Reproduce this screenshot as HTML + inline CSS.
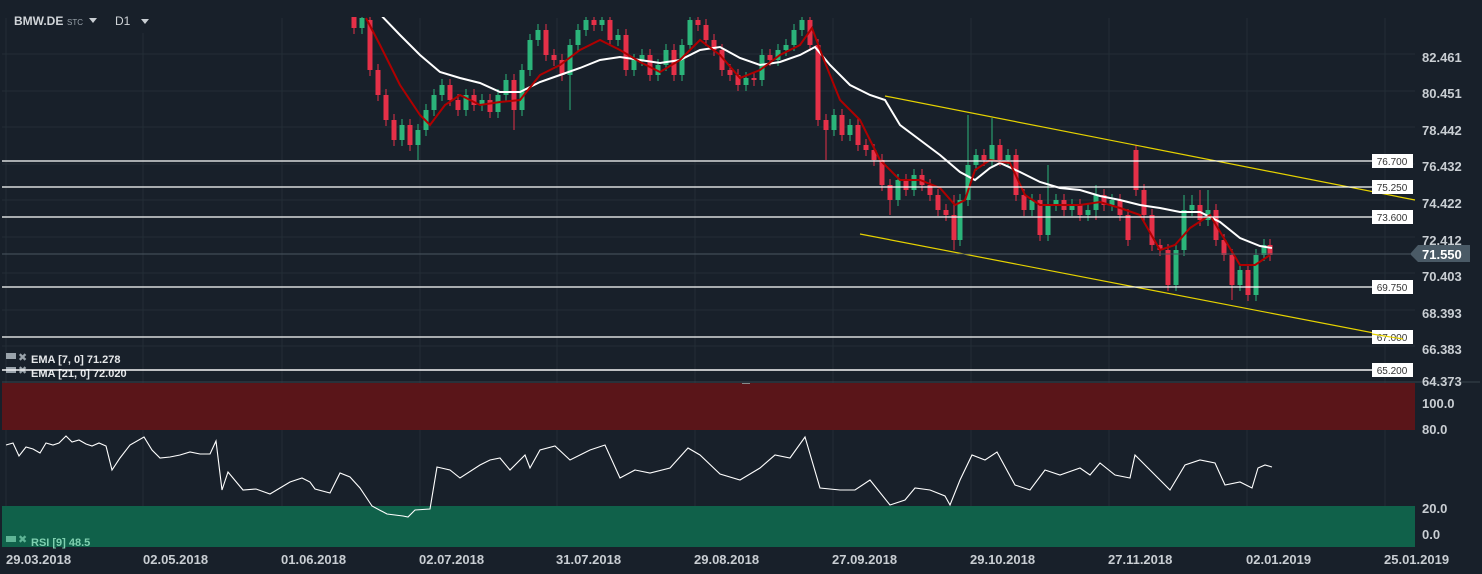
<!DOCTYPE html><html><head><style>
body{margin:0;width:1482px;height:574px;background:#18202a;overflow:hidden;font-family:"Liberation Sans",sans-serif}
svg{position:absolute;left:0;top:0}
</style></head><body>
<svg width="1482" height="574" xmlns="http://www.w3.org/2000/svg" font-family="Liberation Sans, sans-serif">
<defs><clipPath id="cp"><rect x="0" y="17" width="1415" height="360"/></clipPath></defs>
<rect width="1482" height="574" fill="#18202a"/>
<g stroke="#232d36" stroke-width="1">
<line x1="6" y1="18" x2="6" y2="547"/><line x1="143" y1="33" x2="143" y2="547"/><line x1="282" y1="18" x2="282" y2="547"/><line x1="420" y1="18" x2="420" y2="547"/><line x1="557" y1="18" x2="557" y2="547"/><line x1="695" y1="18" x2="695" y2="547"/><line x1="833" y1="18" x2="833" y2="547"/><line x1="971" y1="18" x2="971" y2="547"/><line x1="1109" y1="18" x2="1109" y2="547"/><line x1="1247" y1="18" x2="1247" y2="547"/><line x1="1385" y1="18" x2="1385" y2="547"/>
<line x1="2" y1="54" x2="1415" y2="54"/><line x1="2" y1="91" x2="1415" y2="91"/><line x1="2" y1="127" x2="1415" y2="127"/><line x1="2" y1="164" x2="1415" y2="164"/><line x1="2" y1="200" x2="1415" y2="200"/><line x1="2" y1="237" x2="1415" y2="237"/><line x1="2" y1="273" x2="1415" y2="273"/><line x1="2" y1="310" x2="1415" y2="310"/><line x1="2" y1="346" x2="1415" y2="346"/>
</g>
<rect x="2" y="383" width="1413" height="47" fill="#5a1519"/>
<rect x="2" y="506" width="1413" height="41" fill="#10614a"/>
<line x1="2" y1="382" x2="1480" y2="382" stroke="#39434c"/>
<g clip-path="url(#cp)">
<path stroke="#e53048" stroke-width="1" fill="none" d="M354 4V34M370 14V76M378 64V101M386 89V126M394 114V146M410 119V151M450 79V106M458 94V116M474 89V111M490 94V118M514 74V130M546 24V61M554 49V66M562 54V81M594 14V31M610 14V46M626 29V76M650 49V81M674 44V81M698 14V31M706 19V46M714 34V56M722 44V76M730 64V81M738 69V91M754 72V86M770 49V66M810 14V51M818 39V126M826 114V160M842 109V141M858 119V151M866 139V156M874 144V166M882 154V191M890 179V215M906 174V196M922 169V191M930 179V201M938 189V216M946 204V221M954 195V250M984 149V166M1000 139V166M1016 149V201M1024 189V216M1040 194V241M1064 194V216M1080 199V221M1096 190V220M1104 189V211M1120 194V221M1128 209V246M1136 145V196M1144 184V221M1152 209V251M1160 239V256M1168 244V291M1200 190V226M1216 204V246M1224 234V261M1232 249V300M1248 264V301M1270 239V261"/>
<path stroke="#e53048" stroke-width="5" fill="none" d="M354 10V28M370 20V70M378 70V95M386 95V120M394 120V140M410 125V145M450 85V100M458 100V110M474 95V105M490 100V112M514 80V110M546 30V55M554 55V60M562 60V75M594 20V25M610 20V40M626 35V70M650 55V75M674 50V75M698 20V25M706 25V40M714 40V50M722 50V70M730 70V75M738 75V85M754 78V80M770 55V60M810 20V45M818 45V120M826 120V130M842 115V135M858 125V145M866 145V150M874 150V160M882 160V185M890 185V200M906 180V190M922 175V185M930 185V195M938 195V210M946 210V215M954 215V240M984 155V160M1000 145V160M1016 155V195M1024 195V210M1040 200V235M1064 200V210M1080 205V215M1104 195V205M1120 200V215M1128 215V240M1136 150V190M1144 190V215M1152 215V245M1160 245V250M1168 250V285M1200 205V220M1216 210V240M1224 240V255M1232 255V285M1248 270V295M1270 245V255"/>
<path stroke="#2bb47a" stroke-width="1" fill="none" d="M362 12V34M402 119V146M418 124V160M426 104V136M434 89V116M442 79V101M466 89V116M482 94V111M498 89V118M506 74V101M522 64V116M530 34V76M538 24V46M570 39V110M578 24V51M586 14V36M602 14V31M618 29V46M634 54V76M642 49V66M658 59V81M666 44V71M682 39V81M690 14V51M746 72V91M762 49V86M778 44V66M786 39V56M794 24V51M802 14V36M834 109V136M850 119V141M898 174V206M914 169V196M960 194V246M968 115V206M976 149V171M992 118V166M1008 149V166M1032 194V216M1048 165V241M1056 194V211M1072 199V216M1088 204V221M1096 185V216M1112 194V211M1176 244V291M1184 195V256M1192 195V216M1208 190V226M1240 264V291M1256 249V301M1264 239V261"/>
<path stroke="#2bb47a" stroke-width="5" fill="none" d="M362 18V28M402 125V140M418 130V145M426 110V130M434 95V110M442 85V95M466 95V110M482 100V105M498 95V112M506 80V95M522 70V110M530 40V70M538 30V40M570 45V75M578 30V45M586 20V30M602 20V25M618 35V40M634 60V70M642 55V60M658 65V75M666 50V65M682 45V75M690 20V45M746 78V85M762 55V80M778 50V60M786 45V50M794 30V45M802 20V30M834 115V130M850 125V135M898 180V200M914 175V190M960 200V240M968 165V200M976 155V165M992 145V160M1008 155V160M1032 200V210M1048 205V235M1056 200V205M1072 205V210M1088 210V215M1096 195V210M1112 200V205M1176 250V285M1184 210V250M1192 205V210M1208 210V220M1240 270V285M1256 255V295M1264 245V255"/>
<polyline fill="none" stroke="#ffffff" stroke-width="2" points="376,10 400,35 420,55 440,72 460,78 480,83 500,92 520,92 540,82 560,75 580,68 600,60 620,57 640,60 660,63 680,60 700,50 720,47 740,58 760,65 780,62 800,55 815,47 830,65 850,85 870,95 885,100 900,125 920,140 940,155 960,172 975,180 990,168 1000,163 1020,172 1040,182 1060,188 1080,190 1100,196 1120,200 1140,205 1160,208 1180,212 1200,212 1220,222 1240,238 1260,246 1272,248"/>
<polyline fill="none" stroke="#b00000" stroke-width="2" points="366,18 380,45 400,85 420,115 430,125 445,105 460,95 480,105 500,102 520,100 540,75 560,65 580,50 600,40 620,50 640,62 660,72 680,60 700,40 720,55 740,78 760,70 780,55 800,45 812,28 822,55 840,100 860,120 880,160 900,180 920,180 940,188 955,205 965,200 975,170 990,160 1010,163 1025,195 1040,205 1060,205 1080,205 1100,202 1120,208 1140,215 1160,250 1175,245 1190,228 1210,215 1225,240 1240,265 1255,265 1270,255"/>
</g>
<line x1="885" y1="96" x2="1415" y2="200" stroke="#e6d200" stroke-width="1.2"/>
<line x1="860" y1="234" x2="1405" y2="339" stroke="#e6d200" stroke-width="1.2"/>
<g stroke="#ffffff" stroke-width="1.3">
<line x1="2" y1="161" x2="1372" y2="161"/><line x1="2" y1="187" x2="1372" y2="187"/><line x1="2" y1="217" x2="1372" y2="217"/><line x1="2" y1="287" x2="1372" y2="287"/><line x1="2" y1="337" x2="1372" y2="337"/><line x1="2" y1="370" x2="1372" y2="370"/>
</g>
<line x1="2" y1="254" x2="1410" y2="254" stroke="#4a5660"/>
<g font-size="10" fill="#333" text-anchor="middle">
<rect x="1372" y="154" width="41" height="14" fill="#fff"/><text x="1392" y="165">76.700</text>
<rect x="1372" y="180" width="41" height="14" fill="#fff"/><text x="1392" y="191">75.250</text>
<rect x="1372" y="210" width="41" height="14" fill="#fff"/><text x="1392" y="221">73.600</text>
<rect x="1372" y="280" width="41" height="14" fill="#fff"/><text x="1392" y="291">69.750</text>
<rect x="1372" y="330" width="41" height="14" fill="#fff"/><text x="1392" y="341">67.000</text>
<rect x="1372" y="363" width="41" height="14" fill="#fff"/><text x="1392" y="374">65.200</text>
</g>
<line x1="1372" y1="334" x2="1403" y2="339" stroke="#e6d200" stroke-width="1.2"/>
<g font-size="13" font-weight="bold" fill="#c9ced3">
<text x="1422" y="62">82.461</text><text x="1422" y="98">80.451</text><text x="1422" y="135">78.442</text><text x="1422" y="171">76.432</text><text x="1422" y="208">74.422</text><text x="1422" y="245">72.412</text><text x="1422" y="281">70.403</text><text x="1422" y="318">68.393</text><text x="1422" y="354">66.383</text><text x="1422" y="386">64.373</text>
<text x="1422" y="408">100.0</text><text x="1422" y="434">80.0</text><text x="1422" y="513">20.0</text><text x="1422" y="539">0.0</text>
</g>
<polygon points="1410,254 1418,245 1470,245 1470,262 1418,262" fill="#4a5a66"/>
<text x="1422" y="259" font-size="13" font-weight="bold" fill="#fff">71.550</text>
<polyline fill="none" stroke="#ffffff" stroke-width="1.1" points="6,445 13,443 19,456 26,447 33,449 40,453 46,443 53,445 59,443 66,436 72,442 79,440 86,444 92,446 99,443 106,446 112,470 120,458 130,445 144,437 152,450 160,458 170,457 180,455 190,452 200,454 210,454 216,441 222,490 228,472 243,490 256,489 270,494 280,488 290,482 302,478 310,482 315,489 330,493 340,473 350,477 360,488 372,506 387,514 403,516 408,517 415,510 430,509 437,467 450,470 460,478 480,465 490,460 500,458 510,470 525,455 530,468 540,450 555,446 570,460 580,455 590,450 605,445 620,478 635,470 650,473 670,468 688,448 700,455 720,474 740,480 760,468 775,455 790,458 805,437 820,488 840,490 855,490 870,480 890,505 905,500 915,488 930,490 945,496 950,505 960,480 972,455 985,460 997,452 1015,485 1030,490 1045,470 1060,475 1080,468 1090,475 1100,463 1115,475 1130,478 1135,455 1150,470 1160,480 1170,490 1185,465 1200,460 1215,463 1225,485 1240,482 1252,488 1258,468 1265,465 1272,467"/>
<g fill="#9aa3ab" font-size="12">
<rect x="6" y="353" width="10" height="6" fill="#9aa3ab"/><text x="18" y="361" font-size="11">✖</text>
<text x="31" y="363" font-size="11" font-weight="bold" fill="#e6e8ea">EMA [7,  0] 71.278</text>
<rect x="6" y="367" width="10" height="6"/><text x="18" y="374" font-size="11">✖</text>
<text x="31" y="377" font-size="11" font-weight="bold" fill="#e6e8ea">EMA [21,  0] 72.020</text>
<rect x="6" y="536" width="10" height="6" fill="#5fb596"/><text x="18" y="543" font-size="11" fill="#5fb596">✖</text>
<text x="31" y="546" font-size="11" font-weight="bold" fill="#7fd0b0">RSI  [9]  48.5</text>
</g>
<line x1="2" y1="370" x2="1372" y2="370" stroke="#fff" stroke-width="1.3"/>
<g font-size="13" font-weight="bold" fill="#c9ced3">
<text x="6" y="564">29.03.2018</text><text x="143" y="564">02.05.2018</text><text x="281" y="564">01.06.2018</text><text x="419" y="564">02.07.2018</text><text x="556" y="564">31.07.2018</text><text x="694" y="564">29.08.2018</text><text x="832" y="564">27.09.2018</text><text x="970" y="564">29.10.2018</text><text x="1108" y="564">27.11.2018</text><text x="1246" y="564">02.01.2019</text><text x="1384" y="564">25.01.2019</text>
</g>
<text x="14" y="25" font-size="12" font-weight="bold" fill="#d0d4d8">BMW.DE</text>
<text x="67" y="25" font-size="8" fill="#9aa3ab">STC</text>
<polygon points="89,18 97,18 93,23" fill="#c9ced3"/>
<text x="115" y="25" font-size="12" fill="#d0d4d8">D1</text>
<polygon points="141,19 149,19 145,24" fill="#c9ced3"/>
<rect x="742" y="383" width="8" height="1" fill="#888"/>
</svg>
</body></html>
